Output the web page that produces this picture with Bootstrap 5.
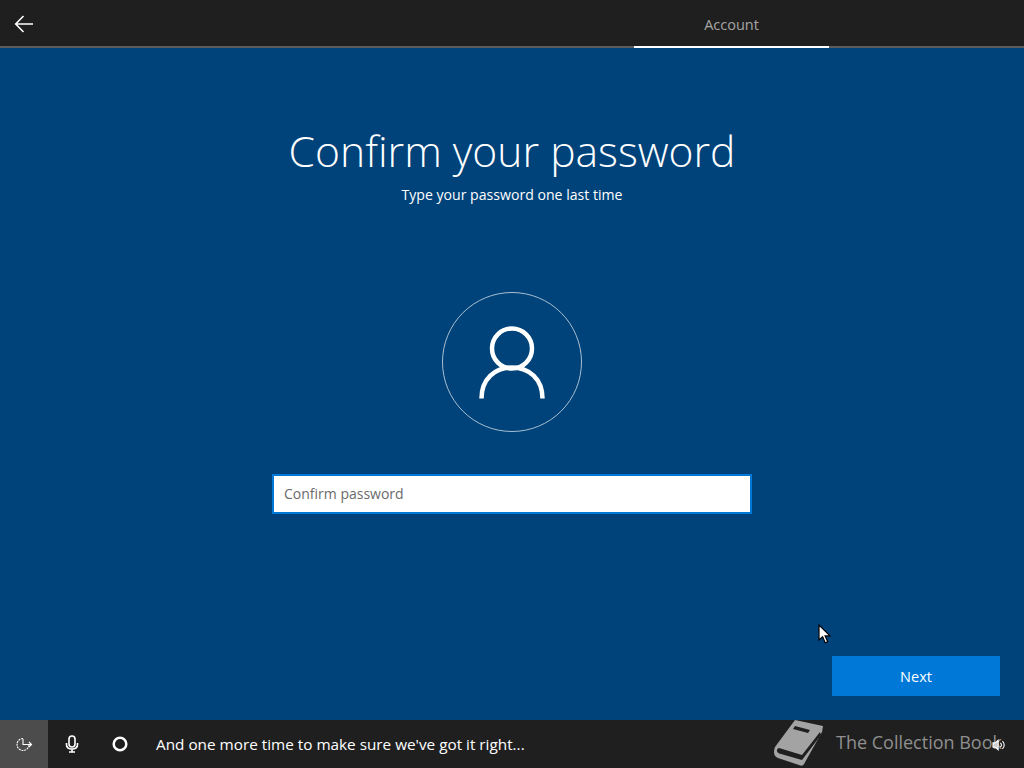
<!DOCTYPE html>
<html lang="en">
<head>
<meta charset="utf-8">
<title>Confirm your password</title>
<link href="https://cdn.jsdelivr.net/npm/bootstrap@5.3.0/dist/css/bootstrap.min.css" rel="stylesheet">
<style>
html,body{height:100%;margin:0;overflow:hidden}
body{background:#00437a;color:#fff;font-family:"Open Sans","Noto Sans",sans-serif}
.oobe-top{height:48px;background:#1f1f1f;border-bottom:2px solid #5c5c5c;flex:none}
.oobe-back{width:48px;height:48px;padding:0;border:0;background:none}
.oobe-tabslot{width:195px;margin-right:195px;height:48px;border-bottom:2px solid #fff;color:#a6a6a6;font-size:14.5px;padding-top:15px;line-height:20px;text-align:center}
.oobe-main{height:672px;position:relative;flex:none}
.oobe-title{font-size:42.6px;font-weight:300;line-height:60px;margin:0;padding-top:72px;height:134px}
.oobe-sub{font-size:14.1px;line-height:20px;margin:3px 0 0}
.oobe-avatar{width:140px;height:140px;border:1px solid #a9bfd2;border-radius:50%;margin-top:87px}
.oobe-avatar svg{margin-top:2px}
.oobe-field{width:480px;height:40px;margin-top:42px;border:2px solid #0078d7;border-radius:0;background:#fff;padding:0 10px 2px;font-size:14px;color:#222;font-family:inherit;box-shadow:none}
.oobe-field::placeholder{color:#6b6b6b;opacity:1}
.oobe-next{position:absolute;left:832px;top:608px;width:168px;height:40px;background:#0078d7;color:#fff;border:0;border-radius:0;font-size:14.5px;padding:2px 0 0}
.oobe-cursor{position:absolute;left:818px;top:576px;width:14px;height:20px}
.oobe-bottom{height:48px;background:#1f1f1f;flex:none;position:relative}
.oobe-ico{width:48px;height:48px;flex:none}
.oobe-ico.on{background:#4c4c4c}
.oobe-say{font-size:15.3px;margin-left:12px;line-height:50px;white-space:nowrap}
.oobe-wm{position:absolute;left:773px;top:0;height:48px;color:#8f8f8f;font-size:18px;white-space:nowrap}
.oobe-wm span{margin-left:11px;position:relative;top:-2px}
.oobe-vol{position:absolute;left:992px;top:19px}
</style>
</head>
<body class="d-flex flex-column">
<header class="oobe-top d-flex justify-content-between">
  <button class="oobe-back d-flex align-items-center justify-content-center" aria-label="Back">
    <svg width="20" height="18" viewBox="0 0 20 18" fill="none" stroke="#fff" stroke-width="1.6"><path d="M19 9H2M9.5 1 1.7 9l7.8 8"/></svg>
  </button>
  <div class="oobe-tabslot">Account</div>
</header>
<main class="oobe-main d-flex flex-column align-items-center text-center">
  <h1 class="oobe-title">Confirm your password</h1>
  <p class="oobe-sub">Type your password one last time</p>
  <div class="oobe-avatar d-flex align-items-center justify-content-center">
    <svg width="66" height="74" viewBox="0 0 66 74" fill="none" stroke="#fff" stroke-width="4.500"><circle cx="33" cy="22.500" r="20"/><path d="M2.500 72.500C2.500 53 16 41.500 33 41.500S63.500 53 63.500 72.500"/></svg>
  </div>
  <input class="form-control oobe-field" type="password" placeholder="Confirm password" aria-label="Confirm password">
  <button class="btn oobe-next">Next</button>
  <svg class="oobe-cursor" viewBox="0 0 14 20"><path d="M1 1v15l3.600-3.300 2.600 6 2.500-1-2.600-5.800H12z" fill="#fff" stroke="#000" stroke-width="1.200"/></svg>
</main>
<footer class="oobe-bottom d-flex align-items-center">
  <div class="oobe-ico on d-flex align-items-center justify-content-center">
    <svg width="18" height="16" viewBox="0 0 18 16" fill="none" stroke="#fff" stroke-width="1.100"><path d="M8 2.500A6 6 0 1 0 14 9" stroke-dasharray="2 .8"/><path d="M8 3v5.500h8.500M14 6l2.500 2.500L14 11"/></svg>
  </div>
  <div class="oobe-ico d-flex align-items-center justify-content-center">
    <svg width="14" height="18" viewBox="0 0 14 18" fill="none" stroke="#fff" stroke-width="1.600"><rect x="4" y="1" width="6" height="11" rx="3"/><path d="M1.500 8v1.500C1.500 12.500 4 14 7 14s5.500-1.500 5.500-4.500V8M7 14v3M4 17h6"/></svg>
  </div>
  <div class="oobe-ico d-flex align-items-center justify-content-center">
    <svg width="16" height="16" viewBox="0 0 16 16" fill="none" stroke="#fff" stroke-width="2.500"><circle cx="8" cy="8" r="6.300"/></svg>
  </div>
  <div class="oobe-say">And one more time to make sure we've got it right...</div>
  <div class="oobe-wm d-flex align-items-center">
    <svg width="52" height="48" viewBox="0 0 52 48"><path d="M22 0 50 6 49 12 31 44C30 46 28 46 26 45L5 38C1 37 0 32 2 27z" fill="#a3a3a3"/><path d="M6 28 29 35 47 12 48 15 29 40 8 34C3 33 3 29 6 28z" fill="#1f1f1f"/><path d="M22 6 37 10 35 13 20 9z" fill="#1f1f1f"/></svg>
    <span>The Collection Book</span>
  </div>
  <svg class="oobe-vol" width="14" height="12" viewBox="0 0 16 14" fill="none" stroke="#fff" stroke-width="1.300"><path d="M1 4.500h2.500L7 1.500v11l-3.500-3H1z" fill="#ccc"/><path d="M9.500 4.500a3 3 0 0 1 0 5M12 2.500a6 6 0 0 1 0 9"/></svg>
</footer>
<script src="https://cdn.jsdelivr.net/npm/bootstrap@5.3.0/dist/js/bootstrap.bundle.min.js"></script>
</body>
</html>
